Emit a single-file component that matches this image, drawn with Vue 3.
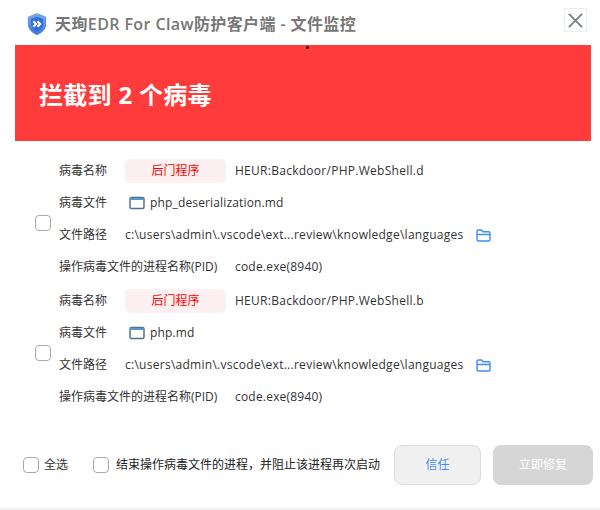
<script setup>
const items = [
  { type: '后门程序', name: 'HEUR:Backdoor/PHP.WebShell.d', file: 'php_deserialization.md', path: 'c:\\users\\admin\\.vscode\\ext...review\\knowledge\\languages', proc: 'code.exe(8940)' },
  { type: '后门程序', name: 'HEUR:Backdoor/PHP.WebShell.b', file: 'php.md', path: 'c:\\users\\admin\\.vscode\\ext...review\\knowledge\\languages', proc: 'code.exe(8940)' },
]
</script>

<template>
  <div class="win">
    <header class="titlebar">
      <svg class="logo" viewBox="0 0 24 26" width="22" height="24">
        <defs>
          <linearGradient id="sh" x1="0" y1="0" x2="0" y2="1">
            <stop offset="0" stop-color="#7fa8e6" />
            <stop offset="1" stop-color="#3f78d8" />
          </linearGradient>
        </defs>
        <path d="M12 1 L22 5 V13 C22 19 17 23 12 25 C7 23 2 19 2 13 V5 Z" fill="url(#sh)" />
        <path d="M12 5 L18.500 7.500 V13 C18.500 17 15 20 12 21.500 C9 20 5.500 17 5.500 13 V7.500 Z" fill="#2f6fdc" />
        <path d="M8 10 L11 13 L8 16 M12.500 10 L15.500 13 L12.500 16" fill="none" stroke="#fff" stroke-width="2.200" />
      </svg>
      <h1 class="title">天珣EDR For Claw防护客户端 - 文件监控</h1>
      <button class="close" aria-label="关闭">
        <svg viewBox="0 0 16 16" width="15" height="15"><path d="M1 1 L15 15 M15 1 L1 15" stroke="#808080" stroke-width="2" fill="none" /></svg>
      </button>
    </header>

    <section class="banner">
      <i class="dot"></i>
      <h2>拦截到 2 个病毒</h2>
    </section>

    <main class="list">
      <div v-for="item in items" :key="item.name" class="item">
        <span class="box big"></span>
        <div class="rows">
          <div class="row">
            <span class="label">病毒名称</span>
            <span class="tag">{{ item.type }}</span>
            <span class="val-gap name">{{ item.name }}</span>
          </div>
          <div class="row">
            <span class="label">病毒文件</span>
            <svg class="file" viewBox="0 0 16 14" width="16" height="14">
              <rect x="1" y="1.500" width="14" height="11" rx="1.500" fill="#fff" stroke="#4f7391" stroke-width="1.500" />
              <path d="M1 3 H15" stroke="#5b94c6" stroke-width="2" />
            </svg>
            <span class="file-name">{{ item.file }}</span>
          </div>
          <div class="row">
            <span class="label">文件路径</span>
            <span class="path">{{ item.path }}</span>
            <svg class="folder" viewBox="0 0 15 13" width="15" height="13">
              <path d="M1 10.500 V2.500 Q1 1 2.500 1 H5.500 L7 2.800 H12.500 Q14 2.800 14 4.300 V10.500 Q14 12 12.500 12 H2.500 Q1 12 1 10.500 Z M1 5.500 H14" fill="none" stroke="#3f8cf5" stroke-width="1.400" />
            </svg>
          </div>
          <div class="row">
            <span class="label pid">操作病毒文件的进程名称(PID)</span>
            <span class="proc">{{ item.proc }}</span>
          </div>
        </div>
      </div>
    </main>

    <footer class="footer">
      <label class="check all"><span class="box"></span>全选</label>
      <label class="check kill"><span class="box"></span>结束操作病毒文件的进程，并阻止该进程再次启动</label>
      <button class="btn trust">信任</button>
      <button class="btn fix">立即修复</button>
    </footer>
    <div class="strip"></div>
  </div>
</template>

<style scoped>
.win {
  width: 600px;
  height: 510px;
  display: flex;
  flex-direction: column;
  background: #fff;
  color: #333;
  font-family: "Open Sans", "Noto Sans CJK SC", sans-serif;
  font-size: 12px;
  line-height: 16px;
  overflow: hidden;
}
.titlebar {
  height: 45px;
  flex: none;
  display: flex;
  align-items: center;
  padding: 0 13px 0 26px;
}
.logo { flex: none; margin-top: 3px; }
.title {
  margin: 2px 0 0 7px;
  font-size: 16px;
  font-weight: 600;
  letter-spacing: 0.4px;
  color: #777;
  flex: 1;
  white-space: nowrap;
}
.close {
  width: 23px;
  height: 24px;
  padding: 0;
  margin-top: -5px;
  border: 1px solid #e5effa;
  background: #fff;
  display: flex;
  align-items: center;
  justify-content: center;
}
.banner {
  position: relative;
  height: 96px;
  flex: none;
  box-sizing: border-box;
  margin: 0 9px 0 15px;
  background: #ff3b3b;
  display: flex;
  align-items: center;
  padding: 3px 0 0 24px;
}
.banner h2 {
  margin: 0;
  color: #fff;
  font-size: 24px;
  line-height: 32px;
  font-weight: 700;
  letter-spacing: 0.3px;
}
.dot {
  position: absolute;
  left: 291px;
  top: 1px;
  width: 3px;
  height: 3px;
  border-radius: 50%;
  background: #111;
}
.list {
  flex: none;
  height: 304px;
  padding-top: 13px;
  box-sizing: border-box;
}
.item {
  display: flex;
  align-items: center;
  height: 130px;
  padding-left: 35px;
}
.box {
  display: block;
  flex: none;
  width: 14px;
  height: 14px;
  border: 1px solid #aaa;
  border-radius: 4px;
  background: #fff;
}
.big { margin-top: 8px; }
.rows {
  margin-left: 8px;
  display: flex;
  flex-direction: column;
}
.row {
  height: 32px;
  display: flex;
  align-items: center;
  white-space: nowrap;
}
.label { width: 66px; flex: none; }
.pid { width: 176px; }
.tag {
  width: 101px;
  height: 24px;
  flex: none;
  border-radius: 5px;
  background: #fdf0f0;
  color: #f00;
  text-align: center;
  line-height: 24px;
}
.val-gap { margin-left: 9px; }
.name, .path { letter-spacing: 0.27px; }
.proc { letter-spacing: 0.2px; }
.file { margin-left: 4px; flex: none; }
.file-name { margin-left: 5px; letter-spacing: 0.15px; }
.folder { margin-left: 12px; flex: none; }
.footer {
  flex: 1;
  display: flex;
  align-items: flex-start;
  padding: 0 7px 0 23px;
}
.check { display: flex; align-items: center; gap: 5px; height: 40px; }
.all { width: 70px; }
.kill { color: #222; gap: 7px; }
.btn {
  height: 40px;
  border-radius: 8px;
  font: inherit;
  padding: 0;
}
.trust {
  width: 87px;
  margin-left: 14px;
  background: #f0f0f0;
  border: 1px solid #dcdcdc;
  color: #4a90e8;
}
.fix {
  width: 100px;
  margin-left: 12px;
  background: #d6d6d6;
  border: none;
  color: #fff;
}
.strip { height: 2px; flex: none; background: #f0f0f0; }
</style>

<style>
html, body { margin: 0; background: #fff; }
</style>
